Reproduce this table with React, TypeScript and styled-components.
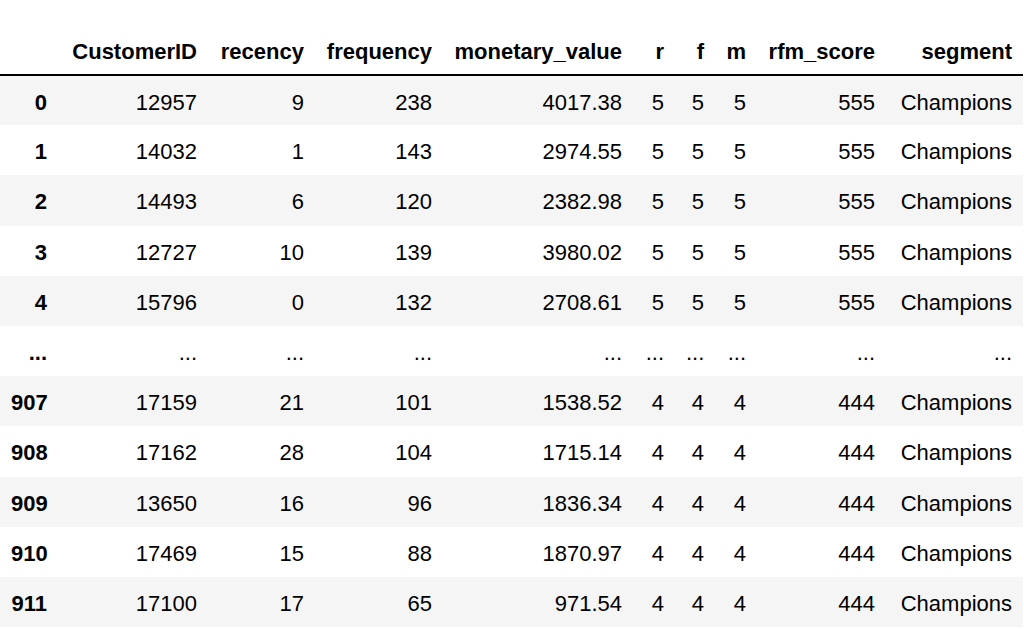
import * as React from "react";
import styled, { createGlobalStyle } from "styled-components";

const GlobalStyle = createGlobalStyle`
  html, body {
    margin: 0;
    padding: 0;
    background: #fff;
  }
  body {
    font-family: "Liberation Sans", Arial, Helvetica, sans-serif;
    color: #000;
  }
`;

const columns = [
  "CustomerID",
  "recency",
  "frequency",
  "monetary_value",
  "r",
  "f",
  "m",
  "rfm_score",
  "segment"
];

// widths of index column + each data column, in px
const widths = [58, 150, 107, 128, 190, 42, 40, 42, 129, 137];

type Row = [string, string, string, string, string, string, string, string, string, string];

const rows: Row[] = [
  ["0", "12957", "9", "238", "4017.38", "5", "5", "5", "555", "Champions"],
  ["1", "14032", "1", "143", "2974.55", "5", "5", "5", "555", "Champions"],
  ["2", "14493", "6", "120", "2382.98", "5", "5", "5", "555", "Champions"],
  ["3", "12727", "10", "139", "3980.02", "5", "5", "5", "555", "Champions"],
  ["4", "15796", "0", "132", "2708.61", "5", "5", "5", "555", "Champions"],
  ["...", "...", "...", "...", "...", "...", "...", "...", "...", "..."],
  ["907", "17159", "21", "101", "1538.52", "4", "4", "4", "444", "Champions"],
  ["908", "17162", "28", "104", "1715.14", "4", "4", "4", "444", "Champions"],
  ["909", "13650", "16", "96", "1836.34", "4", "4", "4", "444", "Champions"],
  ["910", "17469", "15", "88", "1870.97", "4", "4", "4", "444", "Champions"],
  ["911", "17100", "17", "65", "971.54", "4", "4", "4", "444", "Champions"]
];

export default function App() {
  return (
    <>
      <GlobalStyle />
      <Frame>
        <DataFrame>
          <colgroup>
            {widths.map((w, i) => (
              <col key={i} style={{ width: w }} />
            ))}
          </colgroup>
          <Head>
            <HeadRow>
              <HeadCell />
              {columns.map((c) => (
                <HeadCell key={c}>{c}</HeadCell>
              ))}
            </HeadRow>
          </Head>
          <tbody>
            {rows.map((row, i) => (
              <BodyRow key={i}>
                <IndexCell>{row[0]}</IndexCell>
                {row.slice(1).map((v, j) => (
                  <Cell key={j}>{v}</Cell>
                ))}
              </BodyRow>
            ))}
          </tbody>
        </DataFrame>
      </Frame>
    </>
  );
}

const Frame = styled.div`
  padding-top: 25px;
  width: 1024px;
`;

const DataFrame = styled.table`
  border-collapse: collapse;
  border-spacing: 0;
  table-layout: fixed;
  width: 1023px;
  font-size: 22px;
  color: #000;
`;

const Head = styled.thead`
  border-bottom: 2px solid #000;
  vertical-align: bottom;
`;

const HeadRow = styled.tr`
  height: 50px;
`;

const HeadCell = styled.th`
  text-align: right;
  font-weight: bold;
  padding: 4px 11px 0;
  vertical-align: middle;
  white-space: nowrap;
`;

const BodyRow = styled.tr`
  height: 50.2px;
  &:nth-child(odd) {
    background: #f5f5f5;
  }
`;

const IndexCell = styled.th`
  text-align: right;
  font-weight: bold;
  padding: 4px 11px 0;
  vertical-align: middle;
  white-space: nowrap;
`;

const Cell = styled.td`
  text-align: right;
  padding: 4px 11px 0;
  vertical-align: middle;
  white-space: nowrap;
`;
